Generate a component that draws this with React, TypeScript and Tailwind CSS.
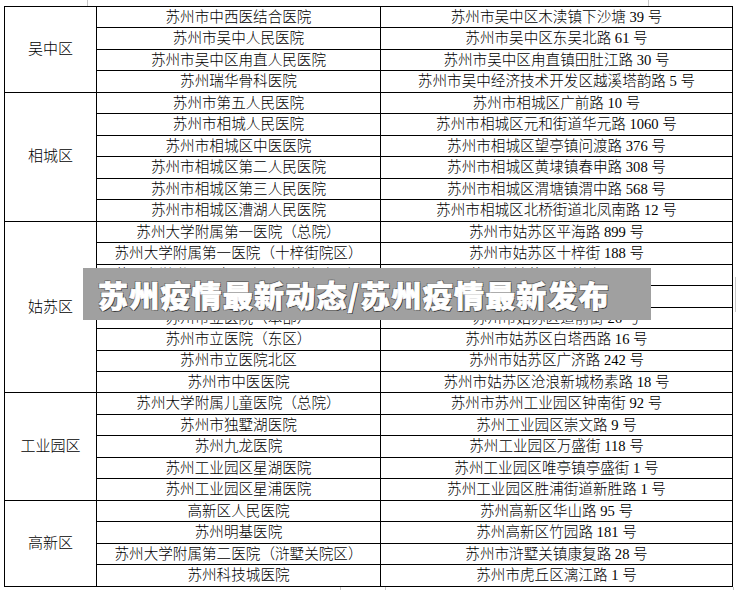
import React from 'react'

type Row = { hospital: string; address: string }
type Group = { district: string; rows: Row[] }

// 苏州各区定点医院一览
const groups: Group[] = [
  {
    district: '吴中区',
    rows: [
      { hospital: '苏州市中西医结合医院', address: '苏州市吴中区木渎镇下沙塘 39 号' },
      { hospital: '苏州市吴中人民医院', address: '苏州市吴中区东吴北路 61 号' },
      { hospital: '苏州市吴中区甪直人民医院', address: '苏州市吴中区甪直镇田肚江路 30 号' },
      { hospital: '苏州瑞华骨科医院', address: '苏州市吴中经济技术开发区越溪塔韵路 5 号' }
    ]
  },
  {
    district: '相城区',
    rows: [
      { hospital: '苏州市第五人民医院', address: '苏州市相城区广前路 10 号' },
      { hospital: '苏州市相城人民医院', address: '苏州市相城区元和街道华元路 1060 号' },
      { hospital: '苏州市相城区中医医院', address: '苏州市相城区望亭镇问渡路 376 号' },
      { hospital: '苏州市相城区第二人民医院', address: '苏州市相城区黄埭镇春申路 308 号' },
      { hospital: '苏州市相城区第三人民医院', address: '苏州市相城区渭塘镇渭中路 568 号' },
      { hospital: '苏州市相城区漕湖人民医院', address: '苏州市相城区北桥街道北凤南路 12 号' }
    ]
  },
  {
    district: '姑苏区',
    rows: [
      { hospital: '苏州大学附属第一医院（总院）', address: '苏州市姑苏区平海路 899 号' },
      { hospital: '苏州大学附属第一医院（十梓街院区）', address: '苏州市姑苏区十梓街 188 号' },
      { hospital: '苏州大学附属儿童医院（景德路院区）', address: '苏州市姑苏区景德路 303 号' },
      { hospital: '苏州大学附属第二医院（三香院区）', address: '苏州市姑苏区三香路 1055 号' },
      { hospital: '苏州市立医院（本部）', address: '苏州市姑苏区道前街 26 号' },
      { hospital: '苏州市立医院（东区）', address: '苏州市姑苏区白塔西路 16 号' },
      { hospital: '苏州市立医院北区', address: '苏州市姑苏区广济路 242 号' },
      { hospital: '苏州市中医医院', address: '苏州市姑苏区沧浪新城杨素路 18 号' }
    ]
  },
  {
    district: '工业园区',
    rows: [
      { hospital: '苏州大学附属儿童医院（总院）', address: '苏州市苏州工业园区钟南街 92 号' },
      { hospital: '苏州市独墅湖医院', address: '苏州工业园区崇文路 9 号' },
      { hospital: '苏州九龙医院', address: '苏州工业园区万盛街 118 号' },
      { hospital: '苏州工业园区星湖医院', address: '苏州工业园区唯亭镇亭盛街 1 号' },
      { hospital: '苏州工业园区星浦医院', address: '苏州工业园区胜浦街道新胜路 1 号' }
    ]
  },
  {
    district: '高新区',
    rows: [
      { hospital: '高新区人民医院', address: '苏州高新区华山路 95 号' },
      { hospital: '苏州明基医院', address: '苏州高新区竹园路 181 号' },
      { hospital: '苏州大学附属第二医院（浒墅关院区）', address: '苏州市浒墅关镇康复路 28 号' },
      { hospital: '苏州科技城医院', address: '苏州市虎丘区漓江路 1 号' }
    ]
  }
]

const cell = 'border border-black text-center align-middle p-0 leading-none whitespace-nowrap'

const App: React.FC = () => {
  return (
    <div className="relative w-[737px] h-[590px] overflow-hidden bg-white pl-[4px] pt-[6px] text-black font-['Liberation_Serif','Noto_Sans_CJK_SC',serif]">
      {/* 表格 */}
      <table className="border-collapse table-fixed w-[728px] h-[580px] text-[14.6px] font-light">
        <colgroup>
          <col className="w-[92px]" />
          <col className="w-[284px]" />
          <col className="w-[352px]" />
        </colgroup>
        <tbody>
          {groups.map((g) =>
            g.rows.map((r, i) => (
              <tr key={g.district + i} className="h-[21.48px]">
                {i === 0 && (
                  <td rowSpan={g.rows.length} className={cell + ' text-[15px]'}>
                    {g.district}
                  </td>
                )}
                <td className={cell}>{r.hospital}</td>
                <td className={cell}>{r.address}</td>
              </tr>
            ))
          )}
        </tbody>
      </table>

      {/* 截图边缘的灰色残线 */}
      <div className="absolute left-[87px] top-0 w-px h-[6px] bg-[#c8c8c8]" />
      <div className="absolute left-[648px] top-0 w-px h-[6px] bg-[#c8c8c8]" />
      <div className="absolute left-[735px] top-[277px] w-px h-[35px] bg-[#c8c8c8]" />
      <div className="absolute left-[340px] top-[587px] w-px h-[3px] bg-[#c8c8c8]" />
      <div className="absolute left-[385px] top-[587px] w-px h-[3px] bg-[#c8c8c8]" />
      <div className="absolute left-[733px] top-[587px] w-px h-[3px] bg-[#c8c8c8]" />

      {/* 标题横幅 */}
      <div className="absolute left-[83px] top-[268px] w-[568px] h-[52px] bg-[#a0a0a0] flex items-center pl-[15px]">
        <span className="text-white text-[30px] font-black leading-none tracking-[1.2px] font-['Noto_Sans_CJK_SC',sans-serif] [-webkit-text-stroke:0.7px_white] [text-shadow:1px_1px_0_#333,-1px_-1px_0_#666,1px_-1px_0_#666,-1px_1px_0_#666]">
          苏州疫情最新动态/苏州疫情最新发布
        </span>
      </div>
    </div>
  )
}

export default App
